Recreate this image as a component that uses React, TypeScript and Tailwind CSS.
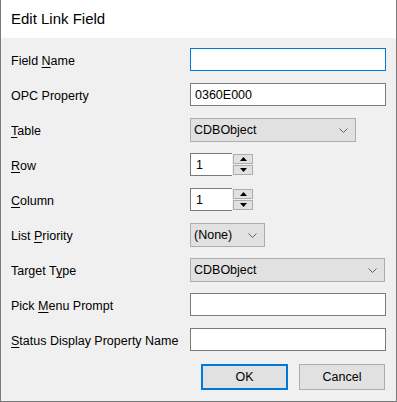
import React from "react";

// Dialogue Windows "Edit Link Field" — champs empilés, boutons OK / Cancel en bas à droite.

function Chevron() {
  return (
    <svg width="9" height="5" viewBox="0 0 9 5" className="shrink-0">
      <polyline points="0.5,0.5 4.5,4.5 8.5,0.5" fill="none" stroke="#606060" strokeWidth="1" />
    </svg>
  );
}

function Label({ text, hot }: { text: string; hot?: number }) {
  if (hot === undefined) return <span>{text}</span>;
  return (
    <span>
      {text.slice(0, hot)}
      <span className="underline underline-offset-2 decoration-1">{text[hot]}</span>
      {text.slice(hot + 1)}
    </span>
  );
}

function TextBox({ value = "", focused = false }: { value?: string; focused?: boolean }) {
  return (
    <div
      className={`h-[23px] w-[196px] bg-white flex items-center px-[4px] pt-px border ${
        focused ? "border-[#0078d7]" : "border-[#7a7a7a]"
      }`}
    >
      {value}
    </div>
  );
}

function Combo({ value, width }: { value: string; width: string }) {
  return (
    <div
      className={`${width} h-[24px] bg-[#e1e1e1] border border-[#adadad] flex items-center justify-between pl-[3px] pr-[7px]`}
    >
      <span className="pt-px">{value}</span>
      <Chevron />
    </div>
  );
}

function Spinner({ value }: { value: string }) {
  return (
    <div className="flex h-[23px]">
      <div className="w-[42px] bg-white border border-r-0 border-[#7a7a7a] flex items-center px-[5px] pt-px">
        {value}
      </div>
      <div className="w-[22px] flex flex-col justify-center gap-px pl-px">
        <div className="h-[10px] w-[20px] bg-[#e1e1e1] border border-[#adadad] flex items-center justify-center">
          <svg width="7" height="4" viewBox="0 0 7 4">
            <polygon points="3.5,0 7,4 0,4" fill="#000" />
          </svg>
        </div>
        <div className="h-[10px] w-[20px] bg-[#e1e1e1] border border-[#adadad] flex items-center justify-center">
          <svg width="7" height="4" viewBox="0 0 7 4">
            <polygon points="0,0 7,0 3.5,4" fill="#000" />
          </svg>
        </div>
      </div>
    </div>
  );
}

function Row({ label, children }: { label: React.ReactNode; children: React.ReactNode }) {
  return (
    <div className="flex items-start h-[35px]">
      <div className="w-[179px] h-[23px] flex items-center pt-[3px]">{label}</div>
      {children}
    </div>
  );
}

export default function App() {
  return (
    <div className="w-[397px] h-[402px] flex flex-col border-x border-b border-[#7a7a7a] font-['Liberation_Sans',Arial,sans-serif] text-[12.5px] text-black">
      <div className="h-[38px] bg-white flex items-center pl-[10px] pt-[1px] text-[15px]">Edit Link Field</div>
      <div className="flex-1 bg-[#f0f0f0] pt-[10px] px-[10px]">
        <Row label={<Label text="Field Name" hot={6} />}>
          <TextBox focused />
        </Row>
        <Row label={<Label text="OPC Property" />}>
          <TextBox value="0360E000" />
        </Row>
        <Row label={<Label text="Table" hot={0} />}>
          <Combo value="CDBObject" width="w-[166px]" />
        </Row>
        <Row label={<Label text="Row" hot={0} />}>
          <Spinner value="1" />
        </Row>
        <Row label={<Label text="Column" hot={0} />}>
          <Spinner value="1" />
        </Row>
        <Row label={<Label text="List Priority" hot={5} />}>
          <Combo value="(None)" width="w-[75px]" />
        </Row>
        <Row label={<Label text="Target Type" hot={8} />}>
          <Combo value="CDBObject" width="w-[195px]" />
        </Row>
        <Row label={<Label text="Pick Menu Prompt" hot={5} />}>
          <TextBox />
        </Row>
        <Row label={<Label text="Status Display Property Name" hot={0} />}>
          <TextBox />
        </Row>
        <div className="flex justify-end gap-[11px] pt-px pr-px">
          <button className="w-[87px] h-[26px] bg-[#e1e1e1] border-2 border-[#0078d7]">OK</button>
          <button className="w-[86px] h-[26px] bg-[#e1e1e1] border border-[#adadad]">Cancel</button>
        </div>
      </div>
    </div>
  );
}
